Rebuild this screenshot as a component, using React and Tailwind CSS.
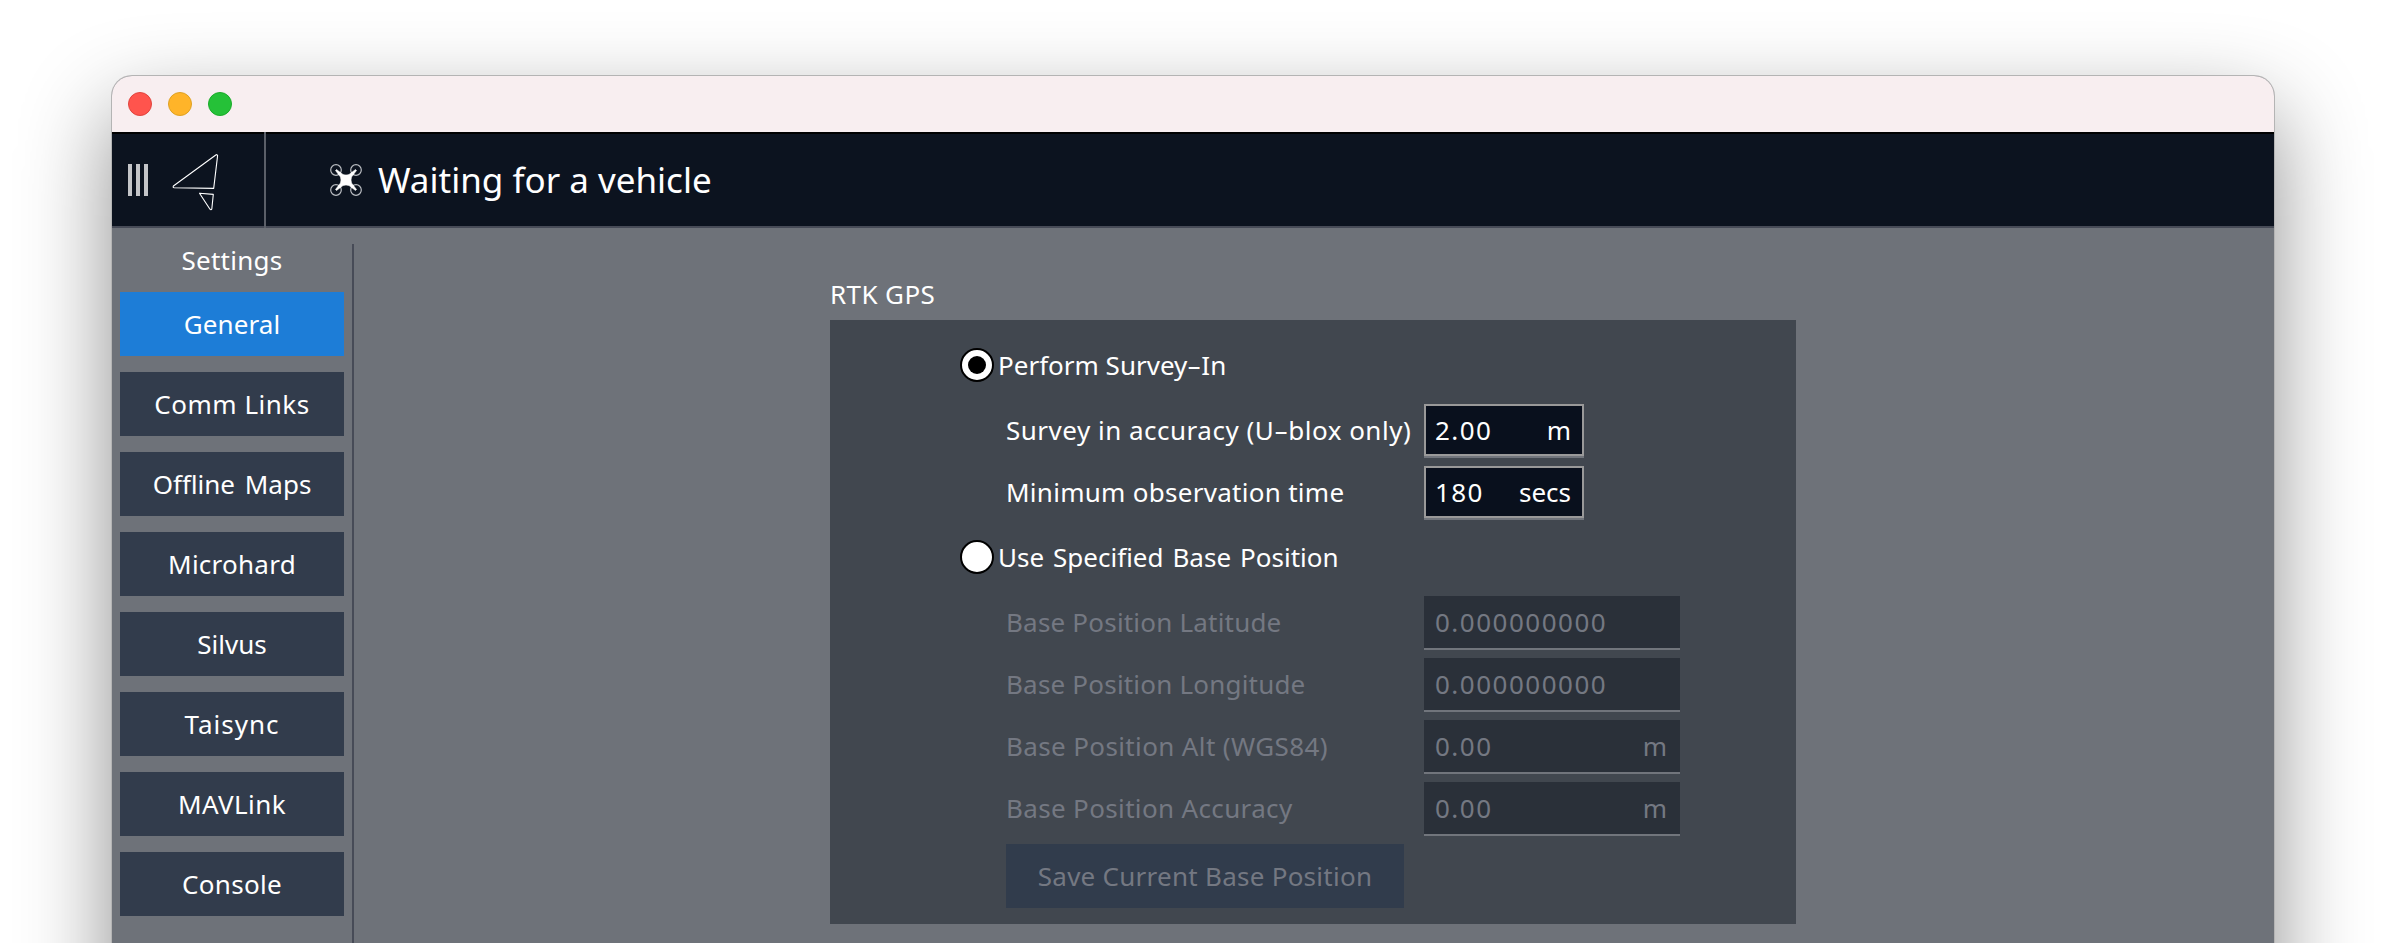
const NAV = [
  { label: 'General', spacing: 'tracking-[0.1px]' },
  { label: 'Comm Links', spacing: 'tracking-[0.5px]' },
  { label: 'Offline Maps', spacing: '[word-spacing:3px]' },
  { label: 'Microhard', spacing: 'tracking-[0.25px]' },
  { label: 'Silvus', spacing: '' },
  { label: 'Taisync', spacing: 'tracking-[1px]' },
  { label: 'MAVLink', spacing: 'tracking-[0.4px]' },
  { label: 'Console', spacing: 'tracking-[0.3px]' },
];

function Dash() {
  return <span className="inline-block w-3.5 scale-x-[1.7] text-center tracking-normal">-</span>;
}

function Radio({ checked, className, children }) {
  return (
    <div className={`flex items-center ${className}`}>
      <svg className="h-[34px] w-[34px] shrink-0" viewBox="0 0 34 34">
        <circle cx="17" cy="17" r="16" fill="#fff" stroke="#000" strokeWidth="2" />
        {checked && <circle cx="17" cy="17" r="9" fill="#000" />}
      </svg>
      <span className="ml-1 whitespace-nowrap">{children}</span>
    </div>
  );
}

function Field({ label, value, unit, disabled, spacing }) {
  return (
    <div className="flex h-[54px] items-center">
      <div className={`w-[418px] whitespace-nowrap pb-0.5 ${spacing} ${disabled ? 'text-[#747882]' : 'text-white'}`}>{label}</div>
      {disabled ? (
        <div className="flex h-[54px] w-64 items-center justify-between border-b-2 border-[#71757c] bg-[#2a3039] pr-[13px] pl-[11px] text-[#747882]">
          <span className="tracking-[1.5px]">{value}</span>
          <span>{unit}</span>
        </div>
      ) : (
        <div className="h-[54px] w-40 border-b-2 border-[#71757c]">
          <div className="flex h-[52px] items-center justify-between border-2 border-[#999] bg-[#09101d] pr-[11px] pl-[9px] text-white">
            <span className="tracking-[1.4px]">{value}</span>
            <span>{unit}</span>
          </div>
        </div>
      )}
    </div>
  );
}

export default function App() {
  return (
    <div className="h-[943px] w-[2386px] overflow-hidden bg-white px-28 pt-[76px] font-['Noto_Sans',sans-serif] text-[26px] leading-8 text-white">
      <div className="h-[1100px] w-[2162px] overflow-hidden rounded-t-[20px] bg-[#6e7279] shadow-[0_0_0_1px_#b4b4b4,0_36px_90px_rgba(0,0,0,0.45)]">
        <div className="flex h-14 items-center gap-4 bg-[#f8eef0] pl-4">
          <span className="size-6 rounded-full border border-[#e0443e] bg-[#ff544d]" />
          <span className="size-6 rounded-full border border-[#dea123] bg-[#ffb429]" />
          <span className="size-6 rounded-full border border-[#1aab29] bg-[#25c138]" />
        </div>
        <header className="flex h-24 border-t-2 border-b-2 border-t-black border-b-[#474b57] bg-[#0c131f]">
          <div className="-mt-0.5 -mb-0.5 flex w-[154px] border-r-2 border-[#5b5f68] pt-0.5 pl-4">
            <svg className="mt-[30px] h-8 w-5" viewBox="0 0 20 32" fill="#c4c5c8">
              <rect width="4" height="32" />
              <rect x="8" width="4" height="32" />
              <rect x="16" width="4" height="32" />
            </svg>
            <svg className="mt-4 ml-5 h-16 w-14" viewBox="0 0 56 64" fill="none" stroke="#fff" strokeWidth="1.1" strokeLinejoin="round">
              <path d="M47.8 5 L5.4 36 Q4.6 37.6 6.2 37.8 L45.7 38.4 L49.6 5.6 Q49.2 4 47.8 5 Z" />
              <path d="M31.5 43.2 L45.3 44.4 L43.8 59 Q43 60.4 42 59.2 Z" />
            </svg>
          </div>
          <div className="flex items-center pl-16">
            <svg className="size-8" viewBox="0 0 32 32" fill="none" stroke="#b9bcc1" strokeWidth="1.2">
              <circle cx="6" cy="6" r="5.3" />
              <circle cx="26" cy="6" r="5.3" />
              <circle cx="6" cy="26" r="5.3" />
              <circle cx="26" cy="26" r="5.3" />
              <path
                d="M5.5 6.5 L6.5 5.5 L13 10.5 Q16 11.5 19 10.5 L25.5 5.5 L26.5 6.5 L21.5 13 Q20.5 16 21.5 19 L26.5 25.5 L25.5 26.5 L19 21.5 Q16 20.5 13 21.5 L6.5 26.5 L5.5 25.5 L10.5 19 Q11.5 16 10.5 13 Z"
                fill="#fff"
                stroke="#fff"
                strokeWidth="0.6"
              />
            </svg>
            <span className="ml-4 text-[35px]">Waiting for a vehicle</span>
          </div>
        </header>
        <div className="flex h-[900px]">
          <nav className="flex w-[240px] flex-col gap-4 pl-2">
            <div className="flex h-12 w-56 items-end justify-center tracking-[0.25px]">Settings</div>
            {NAV.map((item, i) => (
              <div
                key={item.label}
                className={`flex h-16 w-56 shrink-0 items-center justify-center ${item.spacing} ${i === 0 ? 'bg-[#1d7dd7]' : 'bg-[#323c4c]'}`}
              >
                {item.label}
              </div>
            ))}
          </nav>
          <div className="mt-4 w-0.5 bg-[#474b57]" />
          <main className="pt-[50px] pl-[476px]">
            <div className="h-[42px] tracking-[0.4px]">RTK GPS</div>
            <section className="h-[604px] w-[966px] bg-[#41474f] pl-[130px]">
              <Radio checked className="pt-7">
                Perform Survey<Dash />In
              </Radio>
              <div className="flex flex-col gap-2 pt-[22px] pl-[46px]">
                <Field label={<>Survey in accuracy (U<Dash />blox only)</>} value="2.00" unit="m" spacing="tracking-[0.5px]" />
                <Field label="Minimum observation time" value="180" unit="secs" spacing="tracking-[0.28px]" />
              </div>
              <Radio className="pt-5 [word-spacing:2.2px]">Use Specified Base Position</Radio>
              <div className="flex flex-col gap-2 pt-[22px] pl-[46px]">
                <Field disabled label="Base Position Latitude" value="0.000000000" spacing="tracking-[0.2px]" />
                <Field disabled label="Base Position Longitude" value="0.000000000" spacing="tracking-[0.2px]" />
                <Field disabled label="Base Position Alt (WGS84)" value="0.00" unit="m" spacing="tracking-[0.37px]" />
                <Field disabled label="Base Position Accuracy" value="0.00" unit="m" spacing="tracking-[0.35px]" />
                <div className="flex h-16 w-[398px] items-center justify-center bg-[#313c4c] tracking-[0.26px] text-[#747882]">
                  Save Current Base Position
                </div>
              </div>
            </section>
          </main>
        </div>
      </div>
    </div>
  );
}
